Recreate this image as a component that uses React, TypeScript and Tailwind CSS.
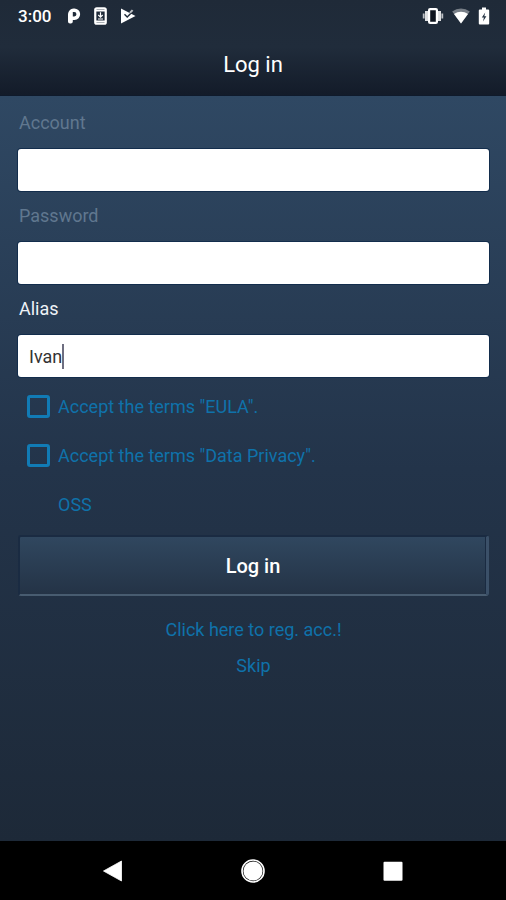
import { useState } from 'react'
import clsx from 'clsx'

type FieldProps = {
  id: string
  label: string
  type?: string
  value: string
  active?: boolean
  onChange: (value: string) => void
}

function StatusBar() {
  return (
    <div className="flex h-8 items-center justify-between pl-[18px] pr-4 text-white">
      <div className="flex items-center">
        <span className="w-[49px] text-[17px] leading-8 font-medium">3:00</span>
        <svg className="h-4 w-[14px]" viewBox="0 0 14 16" fill="currentColor" aria-hidden="true">
          <path fillRule="evenodd" d="M1.8 3.5A5.8 5.8 0 0 1 7.2.4a5.8 5.8 0 0 1 .3 11.6H5.8v1.6a2 2 0 0 1-2 2H3a2 2 0 0 1-2-2V6.5a6 6 0 0 1 .8-3Zm4 .6v4.3h1.5a2.15 2.15 0 0 0 0-4.3Z" />
        </svg>
        <svg className="ml-[13px] h-[18px] w-[13px]" viewBox="0 0 13 18" aria-hidden="true">
          <rect x="1.25" y="1.25" width="10.5" height="15.5" rx="1.5" fill="none" stroke="currentColor" strokeWidth="2.2" />
          <path d="M2 3.4h9M2 14.6h9" stroke="currentColor" strokeWidth="2" />
          <path d="M6.5 5.2v4.5M4.3 8l2.2 2.2L8.7 8M4 12h5" fill="none" stroke="currentColor" strokeWidth="1.2" />
        </svg>
        <svg className="ml-[13px] h-4 w-4" viewBox="0 0 16 16" aria-hidden="true">
          <path d="M1 .5 15.5 8 1 15.5Z" fill="currentColor" />
          <path d="m4.5 6.3 2.7 2.7 6-6" fill="none" stroke="#1f2a38" strokeWidth="1.4" />
          <path d="m9.2 4.2 2.6-2.8 1.6 1.4-2.8 2.8Z" fill="currentColor" opacity=".7" />
        </svg>
      </div>
      <div className="flex items-center">
        <svg className="h-4 w-[22px]" viewBox="0 0 22 16" aria-hidden="true">
          <path d="M4.5 3v10M17.5 3v10" stroke="currentColor" strokeWidth="3" opacity=".85" />
          <path d="M1.7 5.5v5M20.3 5.5v5" stroke="currentColor" strokeWidth="1.8" opacity=".7" />
          <rect x="7.1" y="1.1" width="7.8" height="13.8" rx="1" fill="#0c131d" stroke="currentColor" strokeWidth="2.2" />
        </svg>
        <svg className="ml-2 h-4 w-[18px]" viewBox="0 0 18 16" fill="currentColor" aria-hidden="true">
          <path d="M9 15.5.2 3.6a14.5 14.5 0 0 1 17.6 0Z" opacity=".4" />
          <path d="M9 15.5 2 6a11.8 11.8 0 0 1 14 0Z" />
        </svg>
        <svg className="ml-2 h-[18px] w-3" viewBox="0 0 12 18" aria-hidden="true">
          <path d="M4 .5h4v2h2.2a1 1 0 0 1 1 1v13a1 1 0 0 1-1 1H1.8a1 1 0 0 1-1-1v-13a1 1 0 0 1 1-1H4Z" fill="currentColor" />
          <path d="m7.2 5.5-3.4 5h2.1l-.9 4 3.4-5.2H6.3Z" fill="#263444" />
        </svg>
      </div>
    </div>
  )
}

function Field({ id, label, type = 'text', value, active, onChange }: FieldProps) {
  return (
    <div className="mb-[13px]">
      <label
        htmlFor={id}
        className={clsx('block pl-px text-lg leading-6', active ? 'text-[#eef2f7]' : 'text-[#60778f]')}
      >
        {label}
      </label>
      <div className="relative mt-[14px]">
        <input
          id={id}
          type={type}
          value={value}
          onChange={(e) => onChange(e.target.value)}
          className="block h-[42px] w-full rounded-[3px] bg-white px-[11px] text-lg text-[#333] shadow-[0_0_0_1px_#132d4c] outline-none"
        />
        {/* Text cursor sits right after the typed value */}
        {active && (
          <div className="pointer-events-none absolute inset-y-0 left-[11px] flex items-center text-lg">
            <span className="invisible">{value}</span>
            <span className="h-[25px] w-[2px] bg-[#6e6e80]" />
          </div>
        )}
      </div>
    </div>
  )
}

function Terms({ id, label }: { id: string; label: string }) {
  return (
    <div className="flex h-[49px] items-center pl-[9px]">
      <input
        id={id}
        type="checkbox"
        className="size-[23px] shrink-0 appearance-none rounded-[3px] border-3 border-[#117bb5] checked:bg-[#117bb5]"
      />
      <label htmlFor={id} className="pl-2 text-lg leading-6 text-[#0f72aa]">
        {label}
      </label>
    </div>
  )
}

export default function App() {
  const [account, setAccount] = useState('')
  const [password, setPassword] = useState('')
  const [alias, setAlias] = useState('Ivan')

  return (
    <div className="flex min-h-screen flex-col bg-black font-['Roboto',sans-serif]">
      <header className="border-b border-[#0f1a2b] bg-linear-to-b from-[#1f2a38] via-[#202c3b] to-[#131b29]">
        <StatusBar />
        <h1 className="pt-[18px] pb-4 text-center text-[22px] leading-[29px] text-white">Log in</h1>
      </header>

      <main className="flex-1 bg-linear-to-b from-[#2f4863] via-[#23344a] to-[#1d2938] pr-[17px] pl-[18px] pt-[15px]">
        <form onSubmit={(e) => e.preventDefault()}>
          <Field id="account" label="Account" value={account} onChange={setAccount} />
          <Field id="password" label="Password" type="password" value={password} onChange={setPassword} />
          <Field id="alias" label="Alias" value={alias} onChange={setAlias} active />

          <div className="-mt-2">
            <Terms id="eula" label={'Accept the terms "EULA".'} />
            <Terms id="privacy" label={'Accept the terms "Data Privacy".'} />
            <div className="flex h-[49px] items-center pl-10">
              <a href="#oss" className="text-lg leading-6 text-[#0f72aa]">OSS</a>
            </div>
          </div>

          {/* Dark bevel on the left and top, light one on the right and bottom */}
          <button
            type="submit"
            className="mt-[6px] block h-[61px] w-full rounded-[3px] border-t-2 border-r-3 border-b-2 border-l-2 border-t-[#1a2b42] border-r-[#3b5068] border-b-[#485c70] border-l-[#1a2b42] bg-linear-to-b from-[#30475f] to-[#243346] text-xl font-medium text-white shadow-[inset_-1px_0_0_#1a2b42]"
          >
            Log in
          </button>
        </form>

        <div className="flex flex-col items-center gap-3 pt-[22px] text-lg leading-6 text-[#0f72aa]">
          <a href="#register">Click here to reg. acc.!</a>
          <a href="#skip">Skip</a>
        </div>
      </main>

      <nav className="flex h-[59px] items-center justify-center bg-black text-white">
        <button type="button" aria-label="Back" className="flex w-[140px] justify-center">
          <svg className="h-6 w-6" viewBox="0 0 24 24" fill="currentColor">
            <path d="M2.5 12 20.5 2v20Z" stroke="currentColor" strokeLinejoin="round" strokeWidth=".8" />
          </svg>
        </button>
        <button type="button" aria-label="Home" className="flex w-[140px] justify-center">
          <svg className="h-6 w-6" viewBox="0 0 24 24">
            <circle cx="12" cy="12" r="11" fill="none" stroke="currentColor" strokeWidth="1.6" />
            <circle cx="12" cy="12" r="9.6" fill="currentColor" />
          </svg>
        </button>
        <button type="button" aria-label="Recent apps" className="flex w-[140px] justify-center">
          <svg className="h-6 w-6" viewBox="0 0 24 24" fill="currentColor">
            <rect x="2.5" y="2.7" width="19" height="19" rx="1" />
          </svg>
        </button>
      </nav>
    </div>
  )
}
